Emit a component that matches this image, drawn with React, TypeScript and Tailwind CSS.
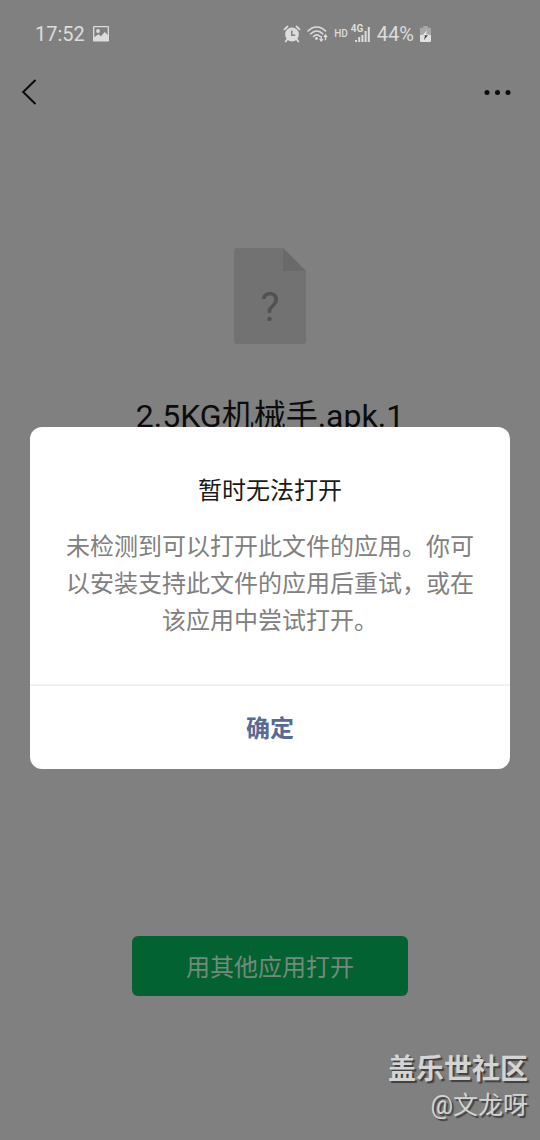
function PictureIcon() {
  return (
    <svg viewBox="0 0 16 16" className="h-4 w-4" aria-hidden="true">
      <path
        fillRule="evenodd"
        fill="currentColor"
        d="M1.2 0h13.6A1.2 1.2 0 0 1 16 1.2v13.2a1.2 1.2 0 0 1-1.2 1.2H1.2A1.2 1.2 0 0 1 0 14.4V1.2A1.2 1.2 0 0 1 1.2 0zM1.3 1.3v9.9l4-3 2.6 2 4-4.2 2.8 3V1.3z"
      />
      <circle cx="5" cy="5" r="1.9" fill="currentColor" />
    </svg>
  );
}

function AlarmIcon() {
  return (
    <svg viewBox="0 0 18 18" className="h-[18px] w-[18px]" fill="none" aria-hidden="true">
      <circle cx="9" cy="9.5" r="6.9" fill="currentColor" />
      <path d="M1.5 4.3 4.5 1.5M16.5 4.3l-3-2.8" stroke="currentColor" strokeWidth="1.8" strokeLinecap="round" />
      <path d="m4.5 14-1.8 2.6M13.5 14l1.8 2.6" stroke="currentColor" strokeWidth="1.8" strokeLinecap="round" />
      <path d="M8.8 5.4v4.8h3.4" stroke="#808080" strokeWidth="1.5" />
    </svg>
  );
}

function WifiIcon() {
  return (
    <svg viewBox="0 0 21 18" className="h-[18px] w-[21px]" fill="none" stroke="currentColor" aria-hidden="true">
      <path d="M1 6C6 .6 13.5.6 18.5 6M3.8 8.8c3.5-3.7 8.4-3.7 11.9 0M6.5 11.5c2-2 4.6-2 6.6 0" strokeWidth="1.6" strokeLinecap="round" />
      <circle cx="9.5" cy="13.5" r="1.4" fill="currentColor" stroke="none" />
      <path d="M14.2 11v5M12.6 14.2l1.6 1.9 1.6-1.9M18.5 15.2v-5M16.9 12l1.6-1.9 1.6 1.9" strokeWidth="1.3" />
    </svg>
  );
}

function SignalIcon() {
  return (
    <svg viewBox="0 0 15 15" className="h-[15px] w-[15px]" fill="currentColor" aria-hidden="true">
      <path d="M0 13h2v2H0zM3.2 10h2v5h-2zM6.4 8h2v7h-2zM9.6 4h2v11h-2zM12.8 0h2v15h-2z" />
    </svg>
  );
}

function BatteryIcon() {
  return (
    <svg viewBox="0 0 11 16" className="h-4 w-[11px]" aria-hidden="true">
      <path d="M3.2 0h4.6v1.8H10a1 1 0 0 1 1 1V9H0V2.8a1 1 0 0 1 1-1h2.2z" fill="#a8a8a8" />
      <path d="M0 9h11v6a1 1 0 0 1-1 1H1a1 1 0 0 1-1-1z" fill="#e2e2e2" />
      <path d="M7 4 2.5 9.5H5L3.9 14l4.6-5.8H6z" fill="#e8e8e8" />
      <path d="M3.5 9.2h4.5L3.9 14 5 9.8z" fill="#444" />
    </svg>
  );
}

function StatusBar() {
  return (
    <div className="flex h-[68px] items-center justify-between pr-[109px] pl-[35px] text-xl text-[#dcdcdc]">
      <div className="flex items-center gap-2">
        <span>17:52</span>
        <PictureIcon />
      </div>
      <div className="flex items-center gap-[6px]">
        <AlarmIcon />
        <WifiIcon />
        <span className="text-[10px] leading-3 font-medium">HD</span>
        <div className="relative ml-px pt-px">
          <SignalIcon />
          <span className="absolute -top-[3px] -left-1 text-[10px] leading-3 font-bold">4G</span>
        </div>
        <span className="ml-px">44%</span>
        <BatteryIcon />
      </div>
    </div>
  );
}

function NavBar() {
  return (
    <header className="flex h-12 items-center justify-between px-5 text-[#0c0c0c]">
      <button type="button" aria-label="返回">
        <svg viewBox="0 0 18 26" className="h-[26px] w-[18px]" fill="none" stroke="currentColor" strokeWidth="2" aria-hidden="true">
          <path d="M15.5 1 3.2 13l12.3 12" />
        </svg>
      </button>
      <button type="button" aria-label="更多" className="pr-2">
        <svg viewBox="0 0 28 6" className="h-[6px] w-7" fill="currentColor" aria-hidden="true">
          <circle cx="3" cy="3.5" r="2.5" />
          <circle cx="13.5" cy="3.5" r="2.5" />
          <circle cx="24" cy="3.5" r="2.5" />
        </svg>
      </button>
    </header>
  );
}

function UnknownFileIcon() {
  return (
    <div className="relative h-24 w-[72px]">
      <svg viewBox="0 0 72 96" className="h-24 w-[72px]" aria-hidden="true">
        <path d="M3 0h46l23 23v70a3 3 0 0 1-3 3H3a3 3 0 0 1-3-3V3a3 3 0 0 1 3-3z" fill="#727272" />
        <path d="M49 0l23 23H49z" fill="#6a6a6a" />
      </svg>
      <span className="absolute inset-x-0 top-10 text-center text-[40px] leading-10 text-[#515151]">?</span>
    </div>
  );
}

function AlertDialog() {
  return (
    <div className="absolute inset-0 flex items-center justify-center px-[30px] pt-14">
      <div
        role="alertdialog"
        aria-labelledby="alert-title"
        aria-describedby="alert-body"
        className="w-full max-w-[480px] overflow-hidden rounded-xl bg-white text-center text-2xl"
      >
        <div className="px-9 pt-[46px] pb-11">
          <h2 id="alert-title" className="leading-9 text-[#1a1a1a]">
            暂时无法打开
          </h2>
          <p id="alert-body" className="mt-5 leading-[37px] text-[#808080]">
            未检测到可以打开此文件的应用。你可以安装支持此文件的应用后重试，或在该应用中尝试打开。
          </p>
        </div>
        <button type="button" className="h-[85px] w-full border-t-2 border-[#f0f0f0] pt-0.5 font-bold text-[#576b95]">
          确定
        </button>
      </div>
    </div>
  );
}

export default function App() {
  return (
    <div className="relative flex min-h-screen flex-col bg-[#808080] font-[Roboto,'Noto_Sans_CJK_SC',sans-serif]">
      <StatusBar />
      <NavBar />
      <main className="flex flex-1 flex-col items-center px-6 pt-[132px] pb-36">
        <UnknownFileIcon />
        <h1 className="mt-12 text-[32px] leading-12 text-[#0c0c0c]">2.5KG机械手.apk.1</h1>
        <button type="button" className="mt-auto h-[60px] w-[276px] rounded-md bg-[#036231] pt-1 text-2xl text-[#75897c]">
          用其他应用打开
        </button>
      </main>
      <AlertDialog />
      <div className="absolute right-3 bottom-4 text-right text-[#d4d4d4] [text-shadow:2px_2px_1px_#404040]">
        <p className="text-[28px] leading-9 font-bold">盖乐世社区</p>
        <p className="text-[25px] leading-9">@文龙呀</p>
      </div>
    </div>
  );
}
